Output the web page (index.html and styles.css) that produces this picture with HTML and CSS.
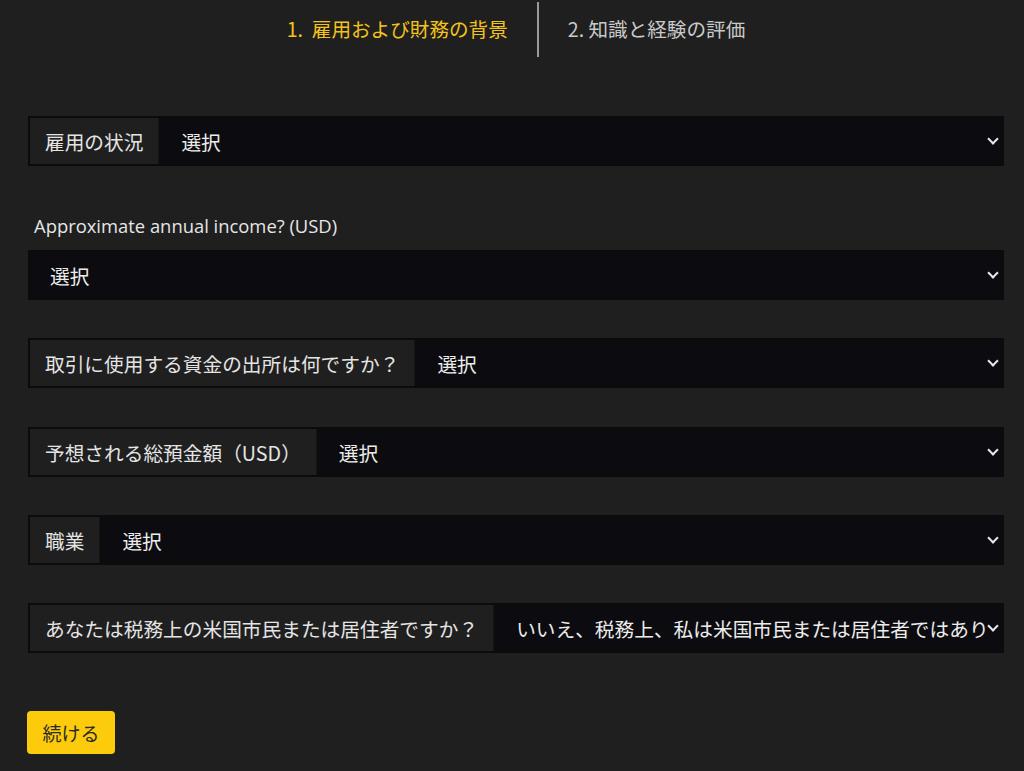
FILE: index.html
```html
<!DOCTYPE html>
<html lang="ja">
<head>
<meta charset="utf-8">
<link rel="stylesheet" href="styles.css">
</head>
<body>
<div class="page">
  <nav class="steps">
    <div class="step active">1.&nbsp; 雇用および財務の背景</div>
    <div class="divider"></div>
    <div class="step">2. 知識と経験の評価</div>
  </nav>

  <form class="form">
    <div class="field row1">
      <div class="label">雇用の状況</div>
      <div class="select"><span class="value">選択</span><span class="chev"></span></div>
    </div>

    <div class="stacked">
      <div class="top-label">Approximate annual income? (USD)</div>
      <div class="field">
        <div class="select wide"><span class="value">選択</span><span class="chev"></span></div>
      </div>
    </div>

    <div class="field">
      <div class="label">取引に使用する資金の出所は何ですか？</div>
      <div class="select"><span class="value">選択</span><span class="chev"></span></div>
    </div>

    <div class="field row4">
      <div class="label">予想される総預金額（USD）</div>
      <div class="select"><span class="value">選択</span><span class="chev"></span></div>
    </div>

    <div class="field">
      <div class="label">職業</div>
      <div class="select"><span class="value">選択</span><span class="chev"></span></div>
    </div>

    <div class="field">
      <div class="label">あなたは税務上の米国市民または居住者ですか？</div>
      <div class="select"><span class="value">いいえ、税務上、私は米国市民または居住者ではあり</span><span class="chev"></span></div>
    </div>

    <button type="button" class="continue">続ける</button>
  </form>
</div>
</body>
</html>
```

FILE: styles.css
```css
html, body {
  margin: 0;
  padding: 0;
  background: #1f1f1f;
}
body {
  font-family: "Noto Sans CJK JP", "Noto Sans", sans-serif;
  color: #e6e6e6;
}
.page {
  width: 976px;
  margin-left: 28px;
}
.steps {
  display: flex;
  justify-content: center;
  align-items: stretch;
  height: 57px;
  padding-top: 2px;
  box-sizing: border-box;
}
.step {
  font-size: 19.6px;
  line-height: 55px;
  color: #c9c9c9;
  padding: 0 29px;
  margin-top: -1px;
}
.step.active {
  color: #f2c31c;
}
.divider {
  width: 2px;
  background: #9a9a9a;
}
.form {
  display: flex;
  flex-direction: column;
  padding-top: 59px;
}
.field {
  display: flex;
  height: 50px;
  border: 2px solid #0b0b0b;
  box-sizing: border-box;
  background: #0c0c10;
  margin-bottom: 38px;
}
.label {
  display: flex;
  align-items: center;
  padding: 0 15px 0 15px;
  background: #1f1f1f;
  font-size: 19.7px;
  color: #e4e4e4;
  white-space: nowrap;
  border-right: 1px solid #151515;
}
.select {
  flex: 1;
  position: relative;
  display: flex;
  align-items: center;
  padding-left: 22px;
  overflow: hidden;
  min-width: 0;
}
.select.wide {
  padding-left: 20px;
}
.value {
  font-size: 19.7px;
  color: #ececec;
  white-space: nowrap;
}
.chev {
  position: absolute;
  right: 5px;
  top: 50%;
  width: 6px;
  height: 6px;
  margin-top: -6px;
  border-right: 2px solid #e8e8e8;
  border-bottom: 2px solid #e8e8e8;
  transform: rotate(45deg);
}
.stacked {
  display: flex;
  flex-direction: column;
}
.stacked .field {
  margin-bottom: 38px;
}
.top-label {
  font-family: "Open Sans", "Noto Sans", sans-serif;
  font-size: 18.4px;
  color: #e6e6e6;
  padding-left: 6px;
  height: 34px;
  line-height: 20px;
  margin-top: 11px;
}
.row1 {
  margin-bottom: 39px;
}
.row4 {
  margin-top: 1px;
}
.continue {
  align-self: flex-start;
  margin-left: -1px;
  margin-top: 20px;
  width: 88px;
  height: 43px;
  border: none;
  border-radius: 4px;
  background: #fccb0b;
  color: #2a2a2a;
  font-family: "Noto Sans CJK JP", sans-serif;
  font-size: 19px;
  padding: 0;
}
```
